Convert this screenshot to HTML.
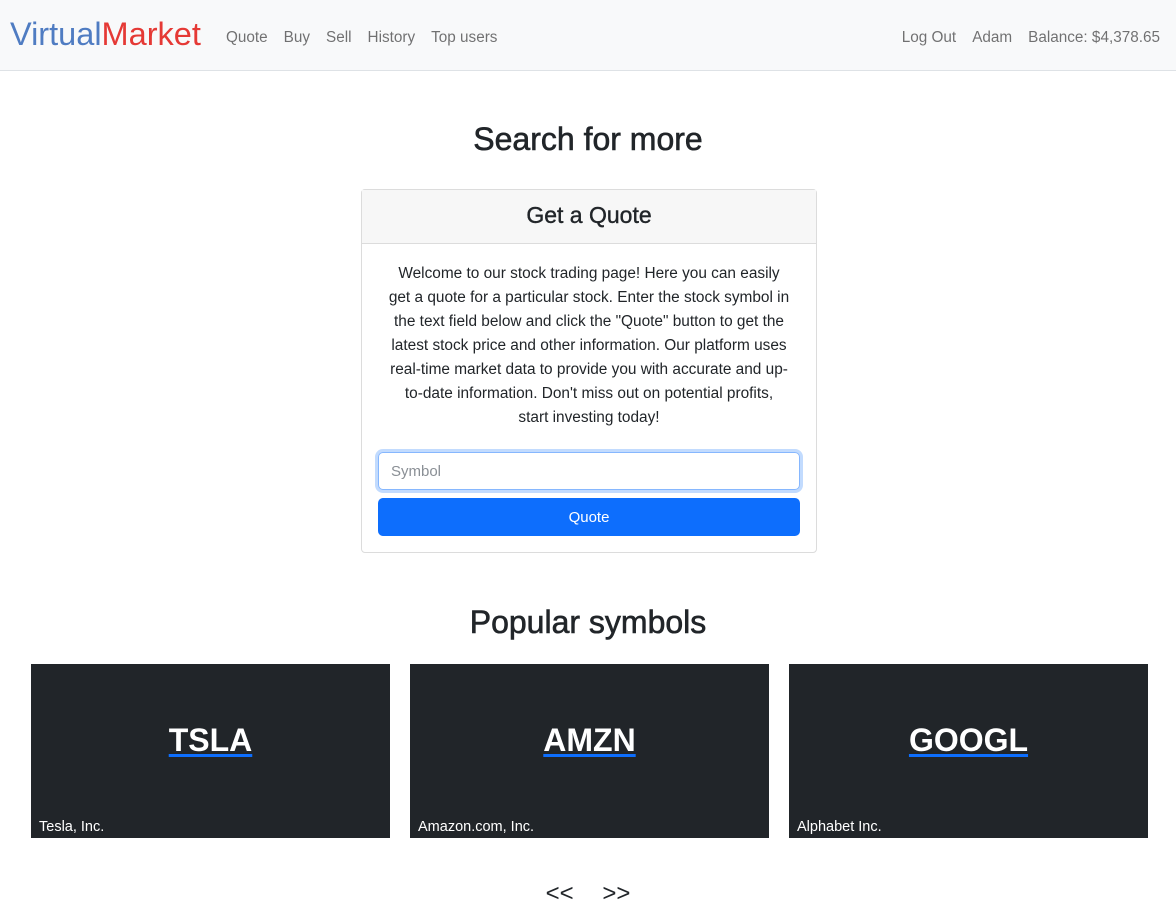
<!DOCTYPE html>
<html><head><style>
*{box-sizing:border-box;margin:0;padding:0}
body{width:1176px;height:910px;overflow:hidden;background:#fff;font-family:"Liberation Sans",sans-serif;color:#212529}
.nav{height:71px;background:#f8f9fa;border-bottom:1px solid #dee2e6;position:relative}
.brand{position:absolute;left:10px;top:16px;font-size:32.5px}
.brand .b{color:#4f7cc2}.brand .r{color:#e53935}
.links{position:absolute;top:29px;font-size:15.3px;color:rgba(0,0,0,.55)}
.links span{margin-right:16px}
h1{position:absolute;width:100%;text-align:center;font-weight:normal;font-size:32px;-webkit-text-stroke:0.6px #212529}
.card{position:absolute;left:361px;top:189px;width:456px;height:364px;border:1px solid #dcdcdc;border-radius:4px}
.ch{height:54px;background:#f7f7f7;border-bottom:1px solid #dcdcdc;text-align:center;font-size:23px;line-height:50px;-webkit-text-stroke:0.4px #212529}
.cb{padding:16px;text-align:center;font-size:15.4px;line-height:24px}
.inp{margin-top:22px;height:38px;border:1px solid #86b7fe;border-radius:5px;box-shadow:0 0 0 3px rgba(13,110,253,.25);text-align:left;padding:7px 12px;color:#8a8f95;font-size:15px}
.btn{margin-top:8px;height:38px;background:#0d6efd;border-radius:5px;color:#fff;line-height:40px;font-size:15px}
.sc{position:absolute;top:664px;width:359px;height:174px;background:#212529;color:#fff}
.sc .t{position:absolute;top:58px;width:100%;text-align:center;font-size:32px;font-weight:bold}
.sc .t span{text-decoration:underline;text-decoration-color:#0d6efd;text-decoration-thickness:3px;text-underline-offset:3px}
.sc .n{position:absolute;left:8px;bottom:3px;font-size:14.5px}
</style></head><body>
<div class="nav">
<div class="brand"><span class="b">Virtual</span><span class="r">Market</span></div>
<div class="links" style="left:226px"><span>Quote</span><span>Buy</span><span>Sell</span><span>History</span><span>Top users</span></div>
<div class="links" style="right:0"><span>Log Out</span><span>Adam</span><span>Balance: $4,378.65</span></div>
</div>
<h1 style="top:121px">Search for more</h1>
<div class="card">
<div class="ch">Get a Quote</div>
<div class="cb" style="padding-top:18px">Welcome to our stock trading page! Here you can easily<br>get a quote for a particular stock. Enter the stock symbol in<br>the text field below and click the "Quote" button to get the<br>latest stock price and other information. Our platform uses<br>real-time market data to provide you with accurate and up-<br>to-date information. Don't miss out on potential profits,<br>start investing today!
<div class="inp">Symbol</div>
<div class="btn">Quote</div>
</div>
</div>
<h1 style="top:604px">Popular symbols</h1>
<div class="sc" style="left:31px"><div class="t"><span>TSLA</span></div><div class="n">Tesla, Inc.</div></div>
<div class="sc" style="left:410px"><div class="t"><span>AMZN</span></div><div class="n">Amazon.com, Inc.</div></div>
<div class="sc" style="left:789px"><div class="t"><span>GOOGL</span></div><div class="n">Alphabet Inc.</div></div>
<div style="position:absolute;top:880px;width:100%;text-align:center;font-size:24px;word-spacing:22px">&lt;&lt; &gt;&gt;</div>
</body></html>
